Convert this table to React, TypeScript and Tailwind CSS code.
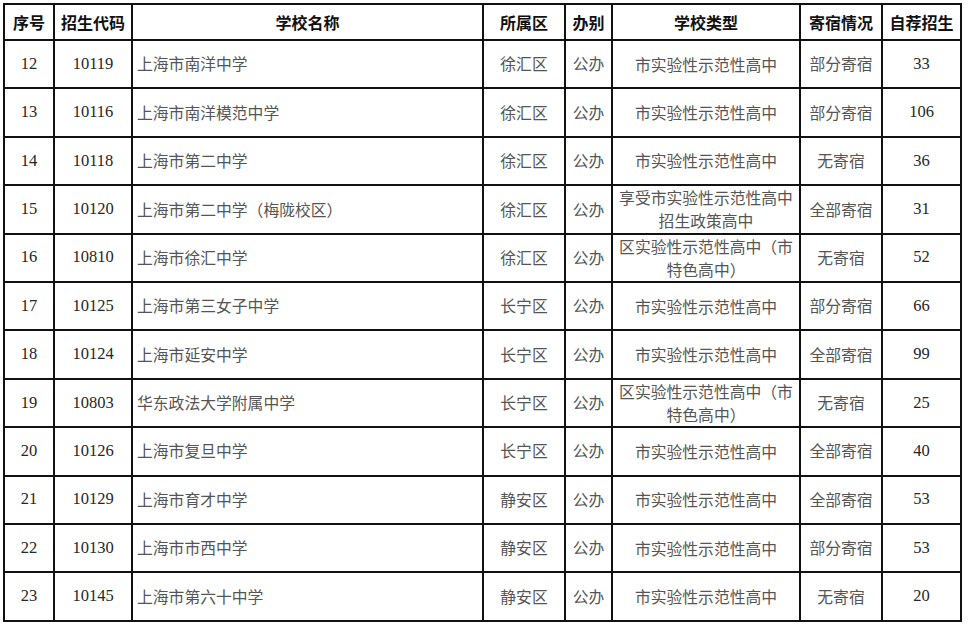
const rows: [string, string, string, string, string, string[], string, string][] = [
  ["12", "10119", "上海市南洋中学", "徐汇区", "公办", ["市实验性示范性高中"], "部分寄宿", "33"],
  ["13", "10116", "上海市南洋模范中学", "徐汇区", "公办", ["市实验性示范性高中"], "部分寄宿", "106"],
  ["14", "10118", "上海市第二中学", "徐汇区", "公办", ["市实验性示范性高中"], "无寄宿", "36"],
  ["15", "10120", "上海市第二中学（梅陇校区）", "徐汇区", "公办", ["享受市实验性示范性高中", "招生政策高中"], "全部寄宿", "31"],
  ["16", "10810", "上海市徐汇中学", "徐汇区", "公办", ["区实验性示范性高中（市", "特色高中）"], "无寄宿", "52"],
  ["17", "10125", "上海市第三女子中学", "长宁区", "公办", ["市实验性示范性高中"], "部分寄宿", "66"],
  ["18", "10124", "上海市延安中学", "长宁区", "公办", ["市实验性示范性高中"], "全部寄宿", "99"],
  ["19", "10803", "华东政法大学附属中学", "长宁区", "公办", ["区实验性示范性高中（市", "特色高中）"], "无寄宿", "25"],
  ["20", "10126", "上海市复旦中学", "长宁区", "公办", ["市实验性示范性高中"], "全部寄宿", "40"],
  ["21", "10129", "上海市育才中学", "静安区", "公办", ["市实验性示范性高中"], "全部寄宿", "53"],
  ["22", "10130", "上海市市西中学", "静安区", "公办", ["市实验性示范性高中"], "部分寄宿", "53"],
  ["23", "10145", "上海市第六十中学", "静安区", "公办", ["市实验性示范性高中"], "无寄宿", "20"],
];

const headers = ["序号", "招生代码", "学校名称", "所属区", "办别", "学校类型", "寄宿情况", "自荐招生"];

const cell = "bg-white flex items-center justify-center text-center";
const num = "text-[16.5px] text-[#262626] [font-family:'Liberation_Serif','Noto_Sans_CJK_SC',serif]";
const cjk = "text-[15.8px] text-[#555] [font-family:'Noto_Sans_CJK_SC','Liberation_Serif',serif]";

export default function App() {
  return (
    <div className="w-[970px] h-[624px] bg-white overflow-hidden pt-[3px] pl-[3px]">
      <div className="inline-grid bg-[#111] p-[2px] gap-[2px] grid-cols-[48px_76px_349px_80px_45px_186px_80px_77px] grid-rows-[34px] auto-rows-[46.4px]">
        {headers.map((h) => (
          <div
            key={h}
            className={`${cell} text-[16px] font-bold text-[#111] [font-family:'Noto_Sans_CJK_SC',sans-serif]`}
          >
            {h}
          </div>
        ))}
        {rows.map(([no, code, name, district, kind, type, board, quota]) => (
          <div key={no} className="contents">
            <div className={`${cell} ${num}`}>{no}</div>
            <div className={`${cell} ${num}`}>{code}</div>
            <div className={`bg-white flex items-center pl-[4px] ${cjk}`}>{name}</div>
            <div className={`${cell} ${cjk}`}>{district}</div>
            <div className={`${cell} ${cjk}`}>{kind}</div>
            <div className={`${cell} ${cjk} flex-col leading-[23px]`}>
              {type.map((t) => (
                <span key={t}>{t}</span>
              ))}
            </div>
            <div className={`${cell} ${cjk}`}>{board}</div>
            <div className={`${cell} ${num}`}>{quota}</div>
          </div>
        ))}
      </div>
    </div>
  );
}
